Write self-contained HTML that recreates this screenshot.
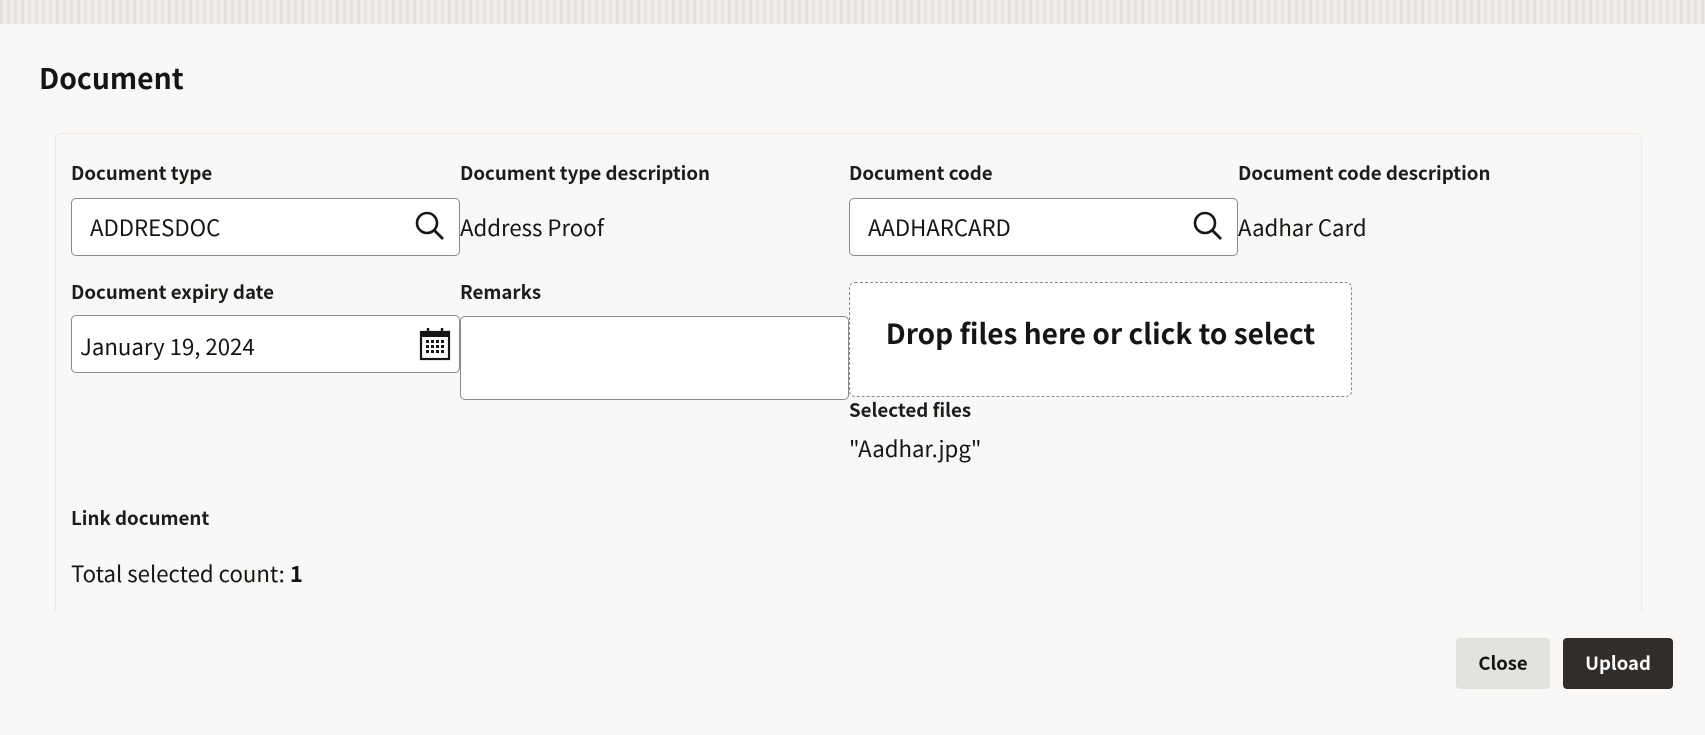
<!DOCTYPE html>
<html><head><meta charset="utf-8"><style>
*{box-sizing:border-box;margin:0;padding:0}
body{width:1705px;height:735px;background:#f9f8f6;font-family:"Noto Sans CJK SC","Liberation Sans",sans-serif;color:#161513;position:relative;overflow:hidden;line-height:1.2}
.top{position:absolute;left:0;top:0;width:1705px;height:24px;background:repeating-linear-gradient(90deg,#e6e3df 0 3px,#efedea 3px 7px)}
.abs{position:absolute;white-space:nowrap}
h1{position:absolute;left:39px;top:61px;font-size:28.3px;font-weight:bold;line-height:1.2}
.card{position:absolute;left:55px;top:133px;width:1587px;height:478px;border:1px solid #ece9e5;border-bottom:none;border-radius:6px 6px 0 0}
.lbl{font-size:18.7px;font-weight:bold;color:#1d1c1a;margin-top:-1px}
.inp{position:absolute;background:#fff;border:1px solid #8c8a86;border-radius:5px}
.val{font-size:22.2px;margin-top:-1px}
.btn{position:absolute;top:638px;height:51px;border-radius:4px;font-size:18.5px;font-weight:bold;display:flex;align-items:center;justify-content:center}
</style></head><body>
<div class="top"></div>
<h1>Document</h1>
<div class="card"></div>
<div class="abs lbl" style="left:71px;top:163px">Document type</div>
<div class="abs lbl" style="left:460px;top:163px">Document type description</div>
<div class="abs lbl" style="left:849px;top:163px">Document code</div>
<div class="abs lbl" style="left:1238px;top:163px">Document code description</div>
<div class="inp" style="left:71px;top:198px;width:389px;height:58px"></div>
<div class="abs val" style="left:90px;top:215px">ADDRESDOC</div>
<svg class="abs" style="left:414px;top:210px" width="32" height="32" viewBox="0 0 32 32"><circle cx="13" cy="13" r="10" fill="none" stroke="#161513" stroke-width="2.6"/><path d="M20 20L29 29" stroke="#161513" stroke-width="2.8"/></svg>
<div class="abs val" style="left:460px;top:215px">Address Proof</div>
<div class="inp" style="left:849px;top:198px;width:389px;height:58px"></div>
<div class="abs val" style="left:868px;top:215px">AADHARCARD</div>
<svg class="abs" style="left:1192px;top:210px" width="32" height="32" viewBox="0 0 32 32"><circle cx="13" cy="13" r="10" fill="none" stroke="#161513" stroke-width="2.6"/><path d="M20 20L29 29" stroke="#161513" stroke-width="2.8"/></svg>
<div class="abs val" style="left:1238px;top:215px">Aadhar Card</div>
<div class="abs lbl" style="left:71px;top:282px">Document expiry date</div>
<div class="abs lbl" style="left:460px;top:282px">Remarks</div>
<div class="inp" style="left:71px;top:315px;width:389px;height:58px"></div>
<div class="abs val" style="left:80px;top:334px">January 19, 2024</div>
<svg class="abs" style="left:419px;top:327px" width="32" height="34" viewBox="0 0 32 34"><rect x="2" y="5" width="28" height="27" fill="none" stroke="#161513" stroke-width="2.2"/><rect x="2" y="5" width="28" height="5" fill="#161513"/><path d="M9 1v7M23 1v7" stroke="#161513" stroke-width="2.4"/><g fill="#161513"><rect x="7" y="13" width="3" height="3"/><rect x="12" y="13" width="3" height="3"/><rect x="17" y="13" width="3" height="3"/><rect x="22" y="13" width="3" height="3"/><rect x="7" y="18" width="3" height="3"/><rect x="12" y="18" width="3" height="3"/><rect x="17" y="18" width="3" height="3"/><rect x="22" y="18" width="3" height="3"/><rect x="7" y="23" width="3" height="3"/><rect x="12" y="23" width="3" height="3"/><rect x="17" y="23" width="3" height="3"/><rect x="22" y="23" width="3" height="3"/></g></svg>
<div class="inp" style="left:460px;top:316px;width:389px;height:84px"></div>
<div class="abs" style="left:849px;top:282px;width:503px;height:115px;border:1px dashed #8c8a86;border-radius:6px;background:#fff;display:flex;align-items:center;justify-content:center;font-size:28px;font-weight:bold;padding-bottom:12px">Drop files here or click to select</div>
<div class="abs lbl" style="left:849px;top:400px">Selected files</div>
<div class="abs val" style="left:849px;top:436px">"Aadhar.jpg"</div>
<div class="abs lbl" style="left:71px;top:508px">Link document</div>
<div class="abs val" style="left:71px;top:561px">Total selected count: <b>1</b></div>
<div class="btn" style="left:1456px;width:94px;background:#e4e2df;color:#161513">Close</div>
<div class="btn" style="left:1563px;width:110px;background:#312d2a;color:#fff">Upload</div>
</body></html>
